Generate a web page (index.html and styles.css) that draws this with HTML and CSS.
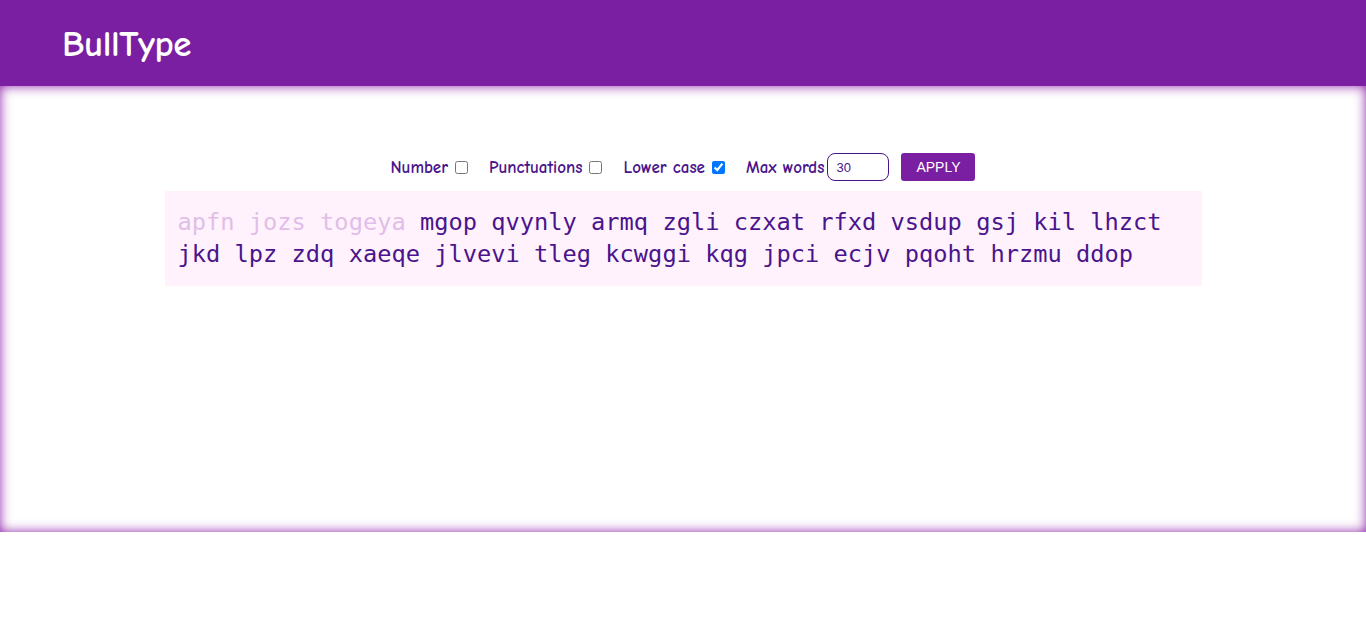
FILE: index.html
```html
<!DOCTYPE html>
<html lang="en">
<head>
<meta charset="utf-8">
<title>BullType</title>
<link rel="stylesheet" href="styles.css">
</head>
<body>
<header class="topbar">
  <h1 class="brand">BullType</h1>
</header>
<main class="stage">
  <div class="controls">
    <label class="opt">Number <input type="checkbox"></label>
    <label class="opt">Punctuations <input type="checkbox"></label>
    <label class="opt">Lower case <input type="checkbox" checked></label>
    <label class="opt max">Max words <input class="num" type="text" value="30"></label>
    <button class="apply">APPLY</button>
  </div>
  <div class="words"><span class="done">apfn jozs togeya</span> mgop qvynly armq zgli czxat rfxd vsdup gsj kil lhzct jkd lpz zdq xaeqe jlvevi tleg kcwggi kqg jpci ecjv pqoht hrzmu ddop</div>
</main>
</body>
</html>
```
FILE: styles.css
```css
html, body {
  margin: 0;
  padding: 0;
  background: #ffffff;
}
body {
  font-family: "Comic Sans MS", "Comic Neue", "Noto Sans", sans-serif;
}
.topbar {
  height: 86px;
  background: #7b1fa2;
  display: flex;
  align-items: center;
  padding-left: 62px;
  box-sizing: border-box;
}
.brand {
  margin: 0;
  color: #ffffff;
  font-size: 37px;
  font-weight: bold;
  letter-spacing: -0.5px;
  position: relative;
  top: 1px;
}
.stage {
  height: 446px;
  box-sizing: border-box;
  padding-top: 67px;
  box-shadow: inset 0 0 12px #8e24aa;
  display: flex;
  flex-direction: column;
  align-items: center;
}
.controls {
  display: flex;
  align-items: center;
  height: 28px;
  color: #4a148c;
  font-size: 17px;
  font-weight: bold;
}
.opt {
  display: flex;
  align-items: center;
  margin-right: 21px;
}
.opt input[type="checkbox"] {
  margin: 0 0 0 7px;
  width: 13px;
  height: 13px;
}
.opt.max {
  margin-right: 12px;
}
.num {
  width: 62px;
  height: 28px;
  box-sizing: border-box;
  margin-left: 3px;
  border: 1px solid #4a148c;
  border-radius: 8px;
  padding: 0 8px;
  font-family: "Liberation Sans", Arial, sans-serif;
  font-size: 13px;
  font-weight: normal;
  color: #4a148c;
  outline: none;
}
.apply {
  width: 74px;
  height: 28px;
  border: none;
  border-radius: 3px;
  background: #7b1fa2;
  color: #ffffff;
  font-family: "Liberation Sans", Arial, sans-serif;
  font-size: 14px;
  padding: 0;
}
.words {
  margin-top: 10px;
  width: 1037px;
  box-sizing: border-box;
  padding: 15px 13px 16px;
  background: #fff2fd;
  font-family: "DejaVu Sans Mono", "Liberation Mono", monospace;
  font-size: 23.7px;
  line-height: 32px;
  color: #4a148c;
}
.done {
  color: #e1bee7;
}
```
